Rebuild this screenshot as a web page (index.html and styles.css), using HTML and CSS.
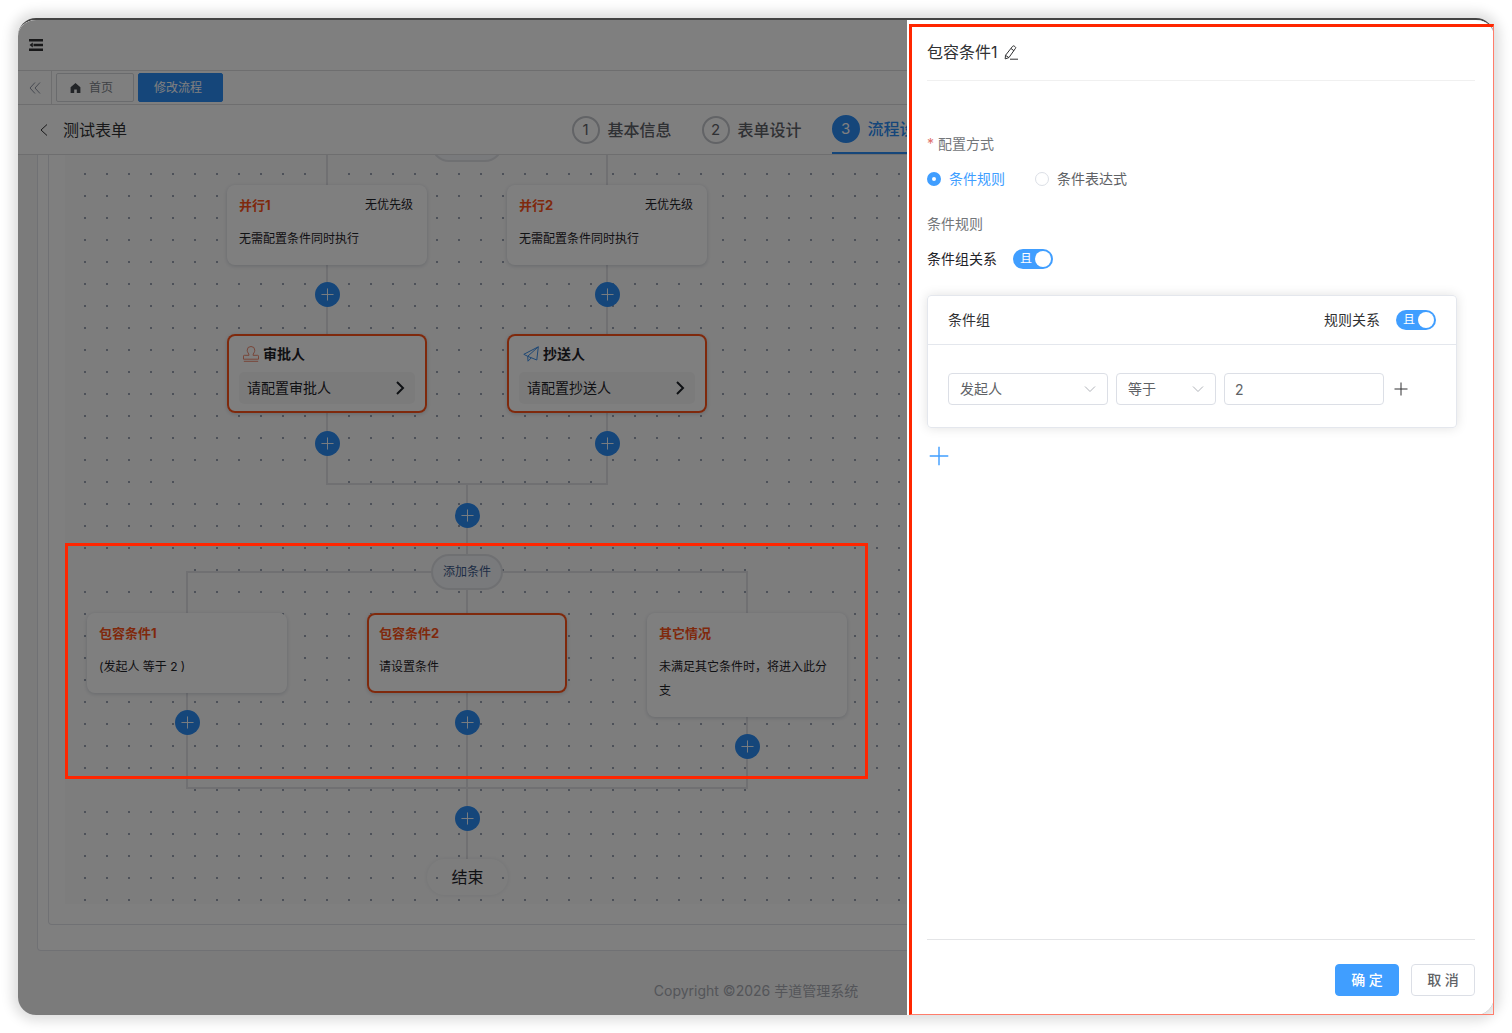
FILE: index.html
```html
<!DOCTYPE html>
<html lang="zh-CN">
<head>
<meta charset="utf-8">
<meta name="viewport" content="width=device-width, initial-scale=1">
<title>修改流程</title>
<link rel="stylesheet" href="styles.css">
</head>
<body>
<svg class="sprite" aria-hidden="true">
  <symbol id="i-plus" viewBox="0 0 14 14"><path d="M7 0.5V13.5M0.5 7H13.5"/></symbol>
  <symbol id="i-down" viewBox="0 0 12 12"><path d="M1 3.5 6 8.5 11 3.5"/></symbol>
  <symbol id="i-next" viewBox="0 0 10 14"><path d="M2 1 8 7 2 13"/></symbol>
</svg>
<div class="frame">
  <div class="window">
    <div class="app">
      <header class="topbar">
        <button class="bare" type="button" aria-label="折叠菜单">
          <svg width="14" height="12" viewBox="0 0 14 12"><path d="M0 0h14v2.400H0zM4.500 4.800H14v2.400H4.500zM0 9.600h14V12H0zM0.500 6 3.800 3.600v4.800z" fill="currentColor"/></svg>
        </button>
      </header>
      <nav class="tabs">
        <button class="tabs-prev" type="button" aria-label="向左">
          <svg width="12" height="12" viewBox="0 0 12 12"><path d="M6 0.5 1 6l5 5.5M11 0.5 6 6l5 5.5"/></svg>
        </button>
        <a class="tab" href="#"><svg width="11" height="10" viewBox="0 0 11 10"><path d="M5.500 0 .6 4.300V10h3.600V6.500h2.600V10h3.600V4.300z" fill="currentColor"/></svg>首页</a>
        <a class="tab tab-active" href="#">修改流程</a>
      </nav>
      <div class="pagehead">
        <div class="pagehead-title">
          <button class="bare" type="button" aria-label="返回"><svg width="8" height="12" viewBox="0 0 8 12"><path d="M7 0.500 1 6l6 5.500"/></svg></button>
          <span>测试表单</span>
        </div>
        <ol class="steps">
          <li class="step"><span class="step-no">1</span>基本信息</li>
          <li class="step"><span class="step-no">2</span>表单设计</li>
          <li class="step step-active"><span class="step-no">3</span>流程设计</li>
        </ol>
      </div>
      <main class="content">
        <div class="panel">
          <div class="panel-inner">
            <div class="canvas">
              <svg class="edges" width="830" height="749" viewBox="0 0 830 749" aria-hidden="true">
                <g class="blank">
                  <path d="M121 324h140v8h-140zM543 324h140v8h-140zM0 412h121v8H0zM683 412h139v8H683zM0 632h121v8H0zM683 632h139v8H683z"/>
                </g>
                <g class="lines">
                  <path d="M262 0V329H542V0"/>
                  <path d="M402 329V704"/>
                  <path d="M122 460V417H682V633H122V460"/>
                </g>
              </svg>
              <div class="add-branch" style="left:366px;top:-29px"></div>
              <article class="node" style="left:162px;top:30px">
                <div class="node-head"><b>并行1</b><span>无优先级</span></div>
                <p>无需配置条件同时执行</p>
              </article>
              <article class="node" style="left:442px;top:30px">
                <div class="node-head"><b>并行2</b><span>无优先级</span></div>
                <p>无需配置条件同时执行</p>
              </article>
              <button class="add" type="button" aria-label="添加节点" style="left:250px;top:127px"><svg><use href="#i-plus"/></svg></button>
              <button class="add" type="button" aria-label="添加节点" style="left:530px;top:127px"><svg><use href="#i-plus"/></svg></button>
              <article class="node node-task node-error" style="left:162px;top:179px">
                <h3><svg class="stamp" width="16" height="16" viewBox="0 0 16 16"><path d="M6 9.300C6 7.400 4.200 6.600 4.200 4.200a3.800 3.700 0 0 1 7.600 0c0 2.400-1.800 3.200-1.800 5.100h4.700q.8 0 .8.800v3.100H.5v-3.100q0-.8.8-.8zM.8 15.300h14.400"/></svg>审批人</h3>
                <button class="task-body" type="button">请配置审批人<svg width="10" height="14"><use href="#i-next"/></svg></button>
              </article>
              <article class="node node-task node-error" style="left:442px;top:179px">
                <h3><svg class="plane" width="16" height="16" viewBox="0 0 16 16"><path d="M15.300.8.800 8.300l3.900 2L13.800 14 15.300.8 4.700 10.300l.3 4.900 3.300-3.400"/></svg>抄送人</h3>
                <button class="task-body" type="button">请配置抄送人<svg width="10" height="14"><use href="#i-next"/></svg></button>
              </article>
              <button class="add" type="button" aria-label="添加节点" style="left:250px;top:276px"><svg><use href="#i-plus"/></svg></button>
              <button class="add" type="button" aria-label="添加节点" style="left:530px;top:276px"><svg><use href="#i-plus"/></svg></button>
              <button class="add" type="button" aria-label="添加节点" style="left:390px;top:348px"><svg><use href="#i-plus"/></svg></button>
              <button class="add-branch" type="button" style="left:366px;top:399px">添加条件</button>
              <article class="node" style="left:22px;top:458px">
                <div class="node-head"><b>包容条件1</b></div>
                <p>(发起人 等于 2 )</p>
              </article>
              <article class="node node-error" style="left:302px;top:458px">
                <div class="node-head"><b>包容条件2</b></div>
                <p>请设置条件</p>
              </article>
              <article class="node" style="left:582px;top:458px">
                <div class="node-head"><b>其它情况</b></div>
                <p>未满足其它条件时，将进入此分支</p>
              </article>
              <button class="add" type="button" aria-label="添加节点" style="left:110px;top:555px"><svg><use href="#i-plus"/></svg></button>
              <button class="add" type="button" aria-label="添加节点" style="left:390px;top:555px"><svg><use href="#i-plus"/></svg></button>
              <button class="add" type="button" aria-label="添加节点" style="left:670px;top:579px"><svg><use href="#i-plus"/></svg></button>
              <button class="add" type="button" aria-label="添加节点" style="left:390px;top:651px"><svg><use href="#i-plus"/></svg></button>
              <div class="end-node" style="left:362px;top:704px">结束</div>
            </div>
          </div>
        </div>
      </main>
      <footer class="copyright">Copyright ©2026 芋道管理系统</footer>
    </div>
    <div class="mask"></div>
    <aside class="drawer" aria-label="条件配置">
      <header class="drawer-head">
        <span>包容条件1</span>
        <button class="bare" type="button" aria-label="编辑名称"><svg width="14" height="15" viewBox="0 0 14 15"><path d="M8.600 1.300Q9.200.500 10.200 1.100l1 .7q.9.700.3 1.500L4.900 12.600 1.200 13.900 1.500 10.300zM7 3.500l2.900 2.200M1.500 10.300l3.400 2.300M6 14.200h8"/></svg></button>
      </header>
      <form class="drawer-body">
        <fieldset>
          <legend class="label label-required">配置方式</legend>
          <div class="radios">
            <label><input type="radio" name="mode" checked><span>条件规则</span></label>
            <label><input type="radio" name="mode"><span>条件表达式</span></label>
          </div>
        </fieldset>
        <div class="label">条件规则</div>
        <label class="relation"><span>条件组关系</span>
          <span class="switch"><input type="checkbox" checked><span>且</span></span>
        </label>
        <section class="group">
          <div class="group-head">
            <span>条件组</span>
            <label class="relation"><span>规则关系</span>
              <span class="switch"><input type="checkbox" checked><span>且</span></span>
            </label>
          </div>
          <div class="group-body">
            <span class="select"><select aria-label="条件字段"><option>发起人</option></select><svg width="12" height="12"><use href="#i-down"/></svg></span>
            <span class="select select-short"><select aria-label="运算符"><option>等于</option></select><svg width="12" height="12"><use href="#i-down"/></svg></span>
            <input class="text" type="text" aria-label="条件值" value="2">
            <button class="bare" type="button" aria-label="添加规则"><svg width="14" height="14"><use href="#i-plus"/></svg></button>
          </div>
        </section>
        <button class="bare add-group" type="button" aria-label="添加条件组"><svg width="20" height="20"><use href="#i-plus"/></svg></button>
      </form>
      <footer class="drawer-foot">
        <button class="btn btn-primary" type="button">确 定</button>
        <button class="btn" type="button">取 消</button>
      </footer>
    </aside>
  </div>
  <div class="mark mark-flow"></div>
  <div class="mark mark-drawer"></div>
</div>
</body>
</html>
```
FILE: styles.css
```css
* { box-sizing: border-box; }

body {
  margin: 0;
  background: #fff;
  color: #303133;
  font: 14px/20px Inter, "Noto Sans CJK SC", sans-serif;
}

button, input, select { font: inherit; color: inherit; }
button { cursor: pointer; }
a { color: inherit; text-decoration: none; }
p, h3, ol, fieldset { margin: 0; padding: 0; border: 0; }
svg { display: block; flex: none; fill: none; stroke: currentColor; }
svg [fill="currentColor"] { stroke: none; }
.sprite { display: none; }

.bare {
  display: flex;
  padding: 0;
  border: 0;
  background: none;
}

.frame {
  position: relative;
  display: flex;
  min-height: calc(100vh - 36px);
  margin: 18px;
}

.window {
  position: relative;
  flex: 1;
  min-width: 0;
  display: flex;
  overflow: hidden;
  border-top: 2px solid #444;
  border-radius: 18px;
  box-shadow: 0 0 12px 6px rgba(0, 0, 0, .13);
}

/* Application */
.app {
  flex: 1;
  min-width: 0;
  display: flex;
  flex-direction: column;
  background: #f6f6f7;
}

.topbar {
  display: flex;
  align-items: center;
  height: 51px;
  padding: 0 11px;
  background: #fff;
  border-bottom: 1px solid #dcdcdf;
}

.tabs {
  display: flex;
  align-items: center;
  gap: 4px;
  height: 34px;
  background: #fff;
  border-bottom: 1px solid #dcdcdf;
  font-size: 12px;
}

.tabs-prev {
  display: flex;
  align-items: center;
  justify-content: center;
  align-self: stretch;
  width: 34px;
  padding: 0;
  border: 0;
  border-right: 1px solid #dcdcdf;
  background: none;
  color: #8f95a3;
}

.tab {
  display: flex;
  align-items: center;
  gap: 8px;
  height: 29px;
  padding: 0 20px 0 13px;
  border: 1px solid #d5d6da;
  border-radius: 2px;
  color: #80848c;
}

.tab svg { color: #44484f; }

.tab-active {
  padding: 0 20px 0 15px;
  border-color: #2b8cf5;
  background: #2b8cf5;
  color: #fff;
}

.pagehead {
  display: grid;
  grid-template-columns: 3fr 5fr;
  height: 50px;
  background: #fff;
  border-bottom: 1px solid #dcdcdf;
  font-size: 16px;
}

.pagehead-title {
  display: flex;
  align-items: center;
  gap: 15px;
  padding-left: 22px;
}

.steps {
  display: flex;
  gap: 30px;
  list-style: none;
}

.step {
  display: flex;
  align-items: center;
  gap: 8px;
  color: #5f6269;
  font-weight: 500;
}

.step-no {
  display: flex;
  align-items: center;
  justify-content: center;
  width: 28px;
  height: 28px;
  border: 2px solid #c4c7cc;
  border-radius: 50%;
  font-size: 15px;
  font-weight: 400;
}

.step-active {
  border-bottom: 2px solid #2b8cf5;
  color: #2b8cf5;
}

.step-active .step-no {
  border-color: #2b8cf5;
  background: #2b8cf5;
  color: #fff;
}

.content { flex: 1; padding: 0 19px; }

.panel {
  padding: 0 10px 25px;
  background: #fff;
  border: 1px solid #e0e2e8;
  border-top: 0;
  border-radius: 0 0 4px 4px;
}

.panel-inner {
  padding: 0 16px 20px;
  border: 1px solid #e0e2e8;
  border-top: 0;
  border-radius: 0 0 4px 4px;
}

.copyright {
  padding: 30px 0 14px;
  text-align: center;
  color: #a8abb2;
}

/* Flow canvas */
.canvas {
  position: relative;
  height: 749px;
  overflow: hidden;
  background: #fbfbfb radial-gradient(circle at 1px 1px, #9aa2b2 1px, transparent 1px) 19px 18px / 22px 22px;
}

.edges { position: absolute; inset: 0 auto auto 0; }
.blank { fill: #fbfbfb; stroke: none; }
.lines { stroke: #e0e0e4; stroke-width: 2; }

.node {
  position: absolute;
  width: 200px;
  min-height: 79px;
  padding: 8px 14px 14px 12px;
  border-radius: 8px;
  background: #fff;
  box-shadow: 0 1px 4px rgba(10, 30, 65, .18);
  color: #1f2329;
  font-size: 12px;
  line-height: 24px;
}

.node p { margin-right: -2px; }

.node-error { box-shadow: inset 0 0 0 2px #ff5219, 0 1px 4px rgba(10, 30, 65, .18); }

.node-head {
  display: flex;
  justify-content: space-between;
  margin-bottom: 10px;
}

.node-head b {
  color: #ff5219;
  font-size: 13px;
}

.node-task { padding-bottom: 9px; }

.node-task h3 {
  display: flex;
  align-items: center;
  gap: 4px;
  margin-bottom: 6px;
  padding-left: 4px;
  font-size: 14px;
  line-height: 24px;
}

.stamp { color: #f08a70; }
.plane { color: #3d8fe8; }

.task-body {
  display: flex;
  align-items: center;
  justify-content: space-between;
  width: 176px;
  height: 32px;
  padding: 0 10px 0 8px;
  border: 0;
  border-radius: 5px;
  background: #f7f7f7;
  font-size: 14px;
}

.task-body svg { stroke-width: 2; }

.add {
  position: absolute;
  display: flex;
  align-items: center;
  justify-content: center;
  width: 25px;
  height: 25px;
  padding: 0;
  border: 0;
  border-radius: 50%;
  background: #2b8cf5;
  color: #fff;
}

.add svg { width: 13px; height: 13px; }

.add-branch {
  position: absolute;
  width: 72px;
  height: 36px;
  padding: 0;
  border: 2px solid #dfe0e5;
  border-radius: 18px;
  background: #f2f4f8;
  color: #3d5a8c;
  font-size: 12px;
}

.end-node {
  position: absolute;
  width: 81px;
  padding: 8px 0;
  border-radius: 18px;
  box-shadow: 0 0 5px rgba(10, 30, 65, .09);
  color: #1f2329;
  font-size: 16px;
  text-align: center;
}

.mask {
  position: absolute;
  inset: 0;
  background: rgba(0, 0, 0, .5);
}

/* Drawer */
.drawer {
  position: absolute;
  inset: 0 0 0 auto;
  display: flex;
  flex-direction: column;
  width: 587px;
  max-width: 100%;
  padding: 0 19px 0 20px;
  background: #fff;
}

.drawer-head {
  display: flex;
  align-items: center;
  gap: 6px;
  height: 61px;
  padding-top: 4px;
  border-bottom: 1px solid #f0f0f0;
  font-size: 16px;
}

.drawer-body { flex: 1; padding-top: 48px; }

.label {
  padding: 0;
  color: #73767a;
  line-height: 30px;
}

.label-required::before {
  content: "*";
  margin-right: 4px;
  color: #e0706c;
}

.radios {
  display: flex;
  gap: 30px;
  height: 40px;
  margin-bottom: 10px;
}

.radios label {
  display: flex;
  align-items: center;
  gap: 8px;
  color: #606266;
}

.radios input {
  appearance: none;
  width: 14px;
  height: 14px;
  margin: 0;
  border: 1px solid #dcdfe6;
  border-radius: 50%;
}

.radios input:checked { border: 5px solid #409eff; }
.radios input:checked + span { color: #409eff; }

.relation {
  display: flex;
  align-items: center;
  gap: 16px;
}

.drawer-body > .relation { height: 40px; color: #1f2329; }

.switch {
  display: grid;
  align-items: center;
}

.switch > * { grid-area: 1 / 1; }

.switch input {
  appearance: none;
  display: flex;
  align-items: center;
  justify-content: flex-end;
  width: 40px;
  height: 20px;
  margin: 0;
  padding: 2px;
  border-radius: 10px;
  background: #409eff;
}

.switch input::before {
  content: "";
  width: 16px;
  height: 16px;
  border-radius: 50%;
  background: #fff;
}

.switch > span {
  padding-left: 7px;
  color: #fff;
  font-size: 12px;
}

.group {
  max-width: 530px;
  margin-top: 16px;
  border: 1px solid #e4e7ed;
  border-radius: 4px;
  box-shadow: 0 0 12px rgba(0, 0, 0, .12);
}

.group-head {
  display: flex;
  align-items: center;
  justify-content: space-between;
  height: 49px;
  padding: 0 20px;
  border-bottom: 1px solid #e4e7ed;
}

.group-body {
  display: flex;
  align-items: center;
  gap: 8px;
  padding: 28px 20px 22px;
}

.select {
  display: grid;
  align-items: center;
  width: 160px;
  color: #606266;
}

.select-short { width: 100px; }
.select > * { grid-area: 1 / 1; }

.select svg {
  justify-self: end;
  margin-right: 12px;
  color: #b0b3b9;
  pointer-events: none;
}

.select select, .text {
  appearance: none;
  width: 100%;
  height: 32px;
  padding: 0 11px;
  border: 1px solid #dcdfe6;
  border-radius: 4px;
  background: #fff;
}

.text { width: 160px; padding: 0 10px; color: #606266; }
.group-body .bare { padding-left: 2px; }

.add-group {
  margin: 18px 2px;
  color: #409eff;
}

.drawer-foot {
  display: flex;
  justify-content: flex-end;
  gap: 12px;
  padding: 24px 0 19px;
  border-top: 1px solid #e4e5e7;
}

.btn {
  width: 64px;
  height: 32px;
  padding: 0;
  border: 1px solid #dcdfe6;
  border-radius: 4px;
  background: #fff;
  color: #606266;
  font-weight: 500;
}

.btn-primary {
  border-color: #409eff;
  background: #409eff;
  color: #fff;
}

/* Red callout frames */
.mark {
  position: absolute;
  border: 3px solid #ff2600;
  pointer-events: none;
}

.mark-flow {
  top: 525px;
  left: 47px;
  width: 803px;
  height: 236px;
}

.mark-drawer {
  inset: 6px 0 0 auto;
  width: 585px;
  border-right: 1px solid #ff7d6b;
  border-bottom: 1px solid #ff7d6b;
}
```
